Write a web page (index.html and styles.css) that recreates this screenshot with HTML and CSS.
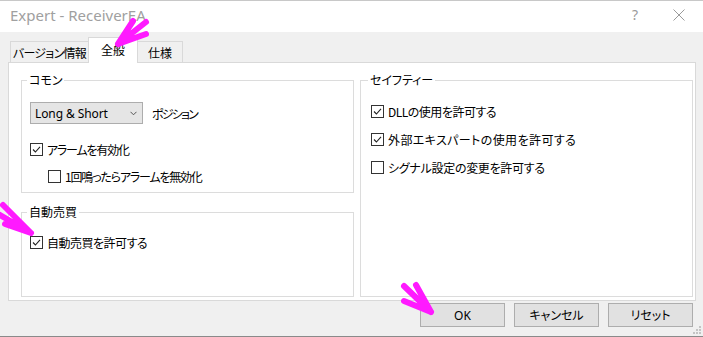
FILE: index.html
```html
<!DOCTYPE html>
<html lang="ja">
<head>
<meta charset="utf-8">
<title>Expert - ReceiverEA</title>
<link rel="stylesheet" href="styles.css">
</head>
<body>
<div class="window">
  <div class="titlebar">
    <span class="title">Expert - ReceiverEA</span>
    <span class="tb-help">?</span>
    <span class="tb-close"><svg width="12" height="12" viewBox="0 0 12 12"><path d="M0.5 0.5 L11.5 11.5 M11.5 0.5 L0.5 11.5" stroke="#9a9a9a" stroke-width="1" fill="none"/></svg></span>
  </div>
  <div class="client">
    <div class="tabs">
      <div class="tab tab-version">バージョン情報</div>
      <div class="tab active">全般</div>
      <div class="tab tab-spec">仕様</div>
    </div>
    <div class="panel">
      <div class="col">
        <fieldset class="group common">
          <legend>コモン</legend>
          <div class="select-row">
            <div class="select">
              <span class="select-text">Long &amp; Short</span>
              <svg class="chev" width="7" height="5" viewBox="0 0 7 5"><path d="M0.5 0.8 L3.5 3.8 L6.5 0.8" stroke="#555" stroke-width="1" fill="none"/></svg>
            </div>
            <span class="label pos">ポジション</span>
          </div>
          <div class="check-row first">
            <span class="box"><svg width="11" height="11" viewBox="0 0 11 11"><path d="M2 5.5 L4.4 8 L9 2.8" stroke="#222" stroke-width="1.1" fill="none"/></svg></span>
            <span class="label">アラームを有効化</span>
          </div>
          <div class="check-row indent">
            <span class="box"></span>
            <span class="label">1回鳴ったらアラームを無効化</span>
          </div>
        </fieldset>
        <fieldset class="group auto">
          <legend>自動売買</legend>
          <div class="check-row">
            <span class="box"><svg width="11" height="11" viewBox="0 0 11 11"><path d="M2 5.5 L4.4 8 L9 2.8" stroke="#222" stroke-width="1.1" fill="none"/></svg></span>
            <span class="label">自動売買を許可する</span>
          </div>
        </fieldset>
      </div>
      <fieldset class="group safety">
        <legend>セイフティー</legend>
        <div class="check-row">
          <span class="box"><svg width="11" height="11" viewBox="0 0 11 11"><path d="M2 5.5 L4.4 8 L9 2.8" stroke="#222" stroke-width="1.1" fill="none"/></svg></span>
          <span class="label dll">DLLの使用を許可する</span>
        </div>
        <div class="check-row">
          <span class="box"><svg width="11" height="11" viewBox="0 0 11 11"><path d="M2 5.5 L4.4 8 L9 2.8" stroke="#222" stroke-width="1.1" fill="none"/></svg></span>
          <span class="label ext">外部エキスパートの使用を許可する</span>
        </div>
        <div class="check-row">
          <span class="box"></span>
          <span class="label sig">シグナル設定の変更を許可する</span>
        </div>
      </fieldset>
    </div>
    <div class="buttons">
      <button class="btn">OK</button>
      <button class="btn">キャンセル</button>
      <button class="btn">リセット</button>
    </div>
  </div>
  <svg class="grip" width="9" height="9" viewBox="0 0 9 9">
    <rect x="7" y="1" width="2" height="2" fill="#c4c4c4"/>
    <rect x="4" y="4" width="2" height="2" fill="#c4c4c4"/>
    <rect x="7" y="4" width="2" height="2" fill="#c4c4c4"/>
    <rect x="1" y="7" width="2" height="2" fill="#c4c4c4"/>
    <rect x="4" y="7" width="2" height="2" fill="#c4c4c4"/>
    <rect x="7" y="7" width="2" height="2" fill="#c4c4c4"/>
  </svg>
  <svg class="annot" width="703" height="337" viewBox="0 0 703 337">
    <g stroke="#ff1aff" stroke-width="6" stroke-linecap="round" fill="none">
      <path d="M118 43 L133 20 M118 43 L146 21 M118 43 L146 33"/>
      <path d="M31 232 L3 204 M31 232 L0 214 M31 232 L5 223"/>
      <path d="M431 311 L404 285 M431 311 L416 284 M431 311 L404 300"/>
    </g>
  </svg>
</div>
</body>
</html>
```

FILE: styles.css
```css
* { box-sizing: border-box; }
html, body { margin: 0; padding: 0; }
body {
  width: 703px;
  height: 337px;
  overflow: hidden;
  font-family: "Noto Sans CJK JP", "Noto Sans", sans-serif;
  font-size: 12px;
  color: #000;
}
.window {
  position: relative;
  width: 703px;
  height: 337px;
  background: #f0f0f0;
  border-top: 1px solid #c8c8c8;
  border-bottom: 1px solid #8a8a8a;
  display: flex;
  flex-direction: column;
}
.titlebar {
  height: 31px;
  background: #fff;
  display: flex;
  align-items: center;
  padding-left: 10px;
  flex: none;
}
.title {
  flex: 1;
  font-family: "Noto Sans", sans-serif;
  font-size: 15px;
  color: #a0a0a0;
  margin-top: -3px;
}
.tb-help {
  font-family: "Noto Sans", sans-serif;
  font-size: 14px;
  color: #9a9a9a;
  margin-right: 35px;
  margin-top: -4px;
}
.tb-close {
  display: flex;
  margin-right: 18px;
  margin-top: -4px;
}
.client {
  flex: 1;
  display: flex;
  flex-direction: column;
  padding: 5px 7px 0 8px;
}
.tabs {
  height: 26px;
  margin-bottom: -1px;
  margin-left: 2px;
  display: flex;
  align-items: flex-start;
  position: relative;
  z-index: 1;
}
.tab {
  height: 21px;
  margin-top: 4px;
  border: 1px solid #d9d9d9;
  border-bottom: none;
  background: #f0f0f0;
  display: flex;
  align-items: center;
  justify-content: center;
  font-feature-settings: "palt";
  white-space: nowrap;
  padding-top: 1px;
}
.tab-version { width: 78px; border-right: none; letter-spacing: -0.7px; }
.tab-spec { width: 45px; border-left: none; }
.tab.active {
  width: 50px;
  height: 26px;
  margin-top: 0;
  background: #fff;
  padding-top: 0;
  padding-bottom: 3px;
}
.panel {
  height: 239px;
  background: #fff;
  border: 1px solid #d9d9d9;
  padding: 9px 2px 3px 12px;
  display: grid;
  grid-template-columns: 333px 333px;
  column-gap: 6px;
}
.col {
  display: flex;
  flex-direction: column;
  gap: 11px;
}
.group {
  margin: 0;
  border: 1px solid #dcdcdc;
  min-width: 0;
  font-feature-settings: "palt";
}
.group legend {
  padding: 0 2px;
  margin-left: -3px;
  line-height: 16px;
  height: 16px;
}
.common {
  height: 121px;
  padding: 14px 8px 0 8px;
}
.common .label { letter-spacing: -1.2px; }
.common .label.pos { letter-spacing: -1.8px; }
.auto {
  flex: 1;
  padding: 8px 8px 0 8px;
}
.auto .label { letter-spacing: -0.5px; }
.safety {
  padding: 9px 10px 0 10px;
}
.label.dll { letter-spacing: -0.5px; }
.label.ext { letter-spacing: 0.4px; }
.label.sig { letter-spacing: -0.3px; }
.select-row {
  display: flex;
  align-items: center;
  gap: 9px;
  height: 22px;
}
.select {
  width: 113px;
  height: 22px;
  background: #e5e5e5;
  border: 1px solid #adadad;
  display: flex;
  align-items: center;
  justify-content: space-between;
  padding: 0 5px 0 4px;
}
.select-text {
  font-family: "Noto Sans", sans-serif;
  font-size: 12px;
  letter-spacing: -0.1px;
}
.chev { display: block; }
.check-row {
  display: flex;
  align-items: center;
  gap: 4px;
  height: 28px;
}
.common .check-row { height: 27px; }
.common .check-row.first { margin-top: 12px; }
.check-row.indent { padding-left: 18px; }
.box {
  width: 13px;
  height: 13px;
  border: 1px solid #333;
  background: #fff;
  display: flex;
  flex: none;
}
.box svg { display: block; }
.label { white-space: nowrap; }
.buttons {
  display: flex;
  justify-content: flex-end;
  gap: 9px;
  margin-top: 2px;
  padding-right: 3px;
}
.btn {
  width: 85px;
  height: 24px;
  margin: 0;
  padding: 0;
  background: #e1e1e1;
  border: 1px solid #adadad;
  font-family: "Noto Sans", "Noto Sans CJK JP", sans-serif;
  font-size: 12px;
  font-feature-settings: "palt";
  color: #000;
}
.grip {
  position: absolute;
  right: 2px;
  bottom: 2px;
}
.annot {
  position: absolute;
  left: 0;
  top: 0;
  pointer-events: none;
  z-index: 5;
}
```
